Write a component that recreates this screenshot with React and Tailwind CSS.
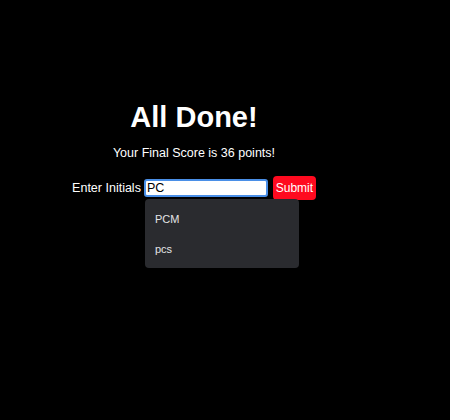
export default function App() {
  return (
    <div className="w-[450px] h-[420px] bg-black text-white" style={{ fontFamily: '"Liberation Sans", Arial, sans-serif' }}>
      <div className="w-[388px] flex flex-col items-center pt-[101px]">
        <h1 className="text-[29px] font-bold leading-[33px]">All Done!</h1>
        <p className="text-[12.5px] leading-[14px] mt-[12px]">Your Final Score is 36 points!</p>

        {/* Initials form */}
        <div className="flex items-center mt-[16px] h-[24px]">
          <label className="text-[12.5px] mr-[3px]">Enter Initials</label>
          <div className="relative">
            <div className="w-[124px] h-[18px] bg-white border-2 border-[#4a8fe7] rounded-[3px] flex items-center px-[1px]">
              <span className="text-black text-[12.5px] leading-none">PC</span>
            </div>
            <div className="absolute left-[1px] top-[20px] w-[154px] h-[69px] bg-[#2a2b2f] rounded-[4px] flex flex-col pl-[10px] pt-[14px] gap-[18px] text-[11px] leading-[12px] text-[#e4e4e6]">
              <span>PCM</span>
              <span>pcs</span>
            </div>
          </div>
          <button className="ml-[5px] w-[43px] h-[24px] bg-[#ff0a1f] rounded-[4px] text-white text-[12px]">Submit</button>
        </div>
      </div>
    </div>
  )
}
